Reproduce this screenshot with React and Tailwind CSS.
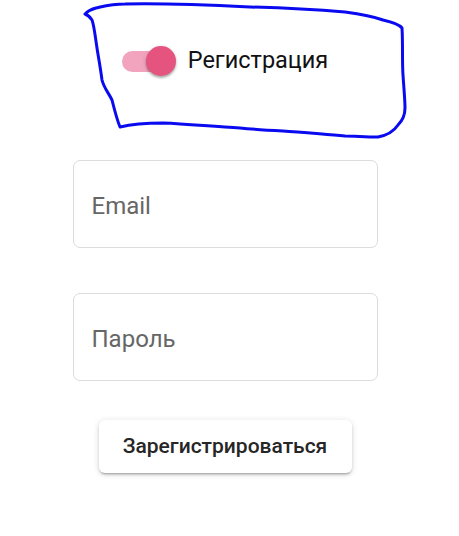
export default function App() {
  return (
    <div className="relative w-[459px] h-[536px] bg-white overflow-hidden" style={{ fontFamily: 'Roboto, "Noto Sans", sans-serif' }}>
      <div className="flex flex-col items-center pr-[9px]">
        <div className="h-[122px] flex items-center">
          <div className="flex items-center">
            <div className="relative w-[54px] h-[30px] flex items-center">
              <div className="w-[51px] h-[21px] rounded-full bg-[#f2a3bd]"></div>
              <div className="absolute left-[24px] top-0 w-[30px] h-[30px] rounded-full bg-[#e5537f] shadow-[0_2px_2px_rgba(0,0,0,0.25),0_1px_4px_rgba(0,0,0,0.15)]"></div>
            </div>
            <span className="ml-[12px] text-[23.5px] text-[#111]">Регистрация</span>
          </div>
        </div>
        <div className="mt-[38px] w-[305px] h-[88px] rounded-[7px] border border-[#dcdcdc] flex items-center pl-[18px]">
          <span className="text-[24px] text-[#666] mt-[3px]">Email</span>
        </div>
        <div className="mt-[45px] w-[305px] h-[88px] rounded-[7px] border border-[#dcdcdc] flex items-center pl-[18px]">
          <span className="text-[24px] text-[#666] mt-[3px]">Пароль</span>
        </div>
        <div className="mt-[39px] w-[253px] h-[53px] rounded-[6px] bg-white flex items-center justify-center shadow-[0_3px_2px_-2px_rgba(0,0,0,0.2),0_2px_3px_rgba(0,0,0,0.14),0_1px_7px_rgba(0,0,0,0.12)]">
          <span className="text-[21px] font-medium text-[#262626]">Зарегистрироваться</span>
        </div>
      </div>
      <svg className="absolute left-0 top-0 pointer-events-none" width="459" height="536" viewBox="0 0 459 536">
        <path
          d="M85 14 C88 11 92 9 96 8 C105 6 112 4 125 4 C170 3 210 5 250 7 C285 8 320 10 345 12 C360 14 372 16 383 20 C392 22 399 24 402 28 C403 45 402 60 403 75 C404 90 405 100 405 108 C405 116 402 121 398 125 C394 131 389 135 378 137 C365 137 355 136 345 136 C320 134 300 132 283 131 C265 130 250 129 240 128 C215 127 190 124 163 123 C145 123 132 124 120 127 C117 120 115 112 112 100 C108 92 104 88 102 80 C100 65 98 55 97 48 C95 35 94 25 92 20 C90 17 88 15 85 14"
          fill="none"
          stroke="#0a0af0"
          strokeWidth="3"
          strokeLinecap="round"
          strokeLinejoin="round"
        />
      </svg>
    </div>
  );
}
